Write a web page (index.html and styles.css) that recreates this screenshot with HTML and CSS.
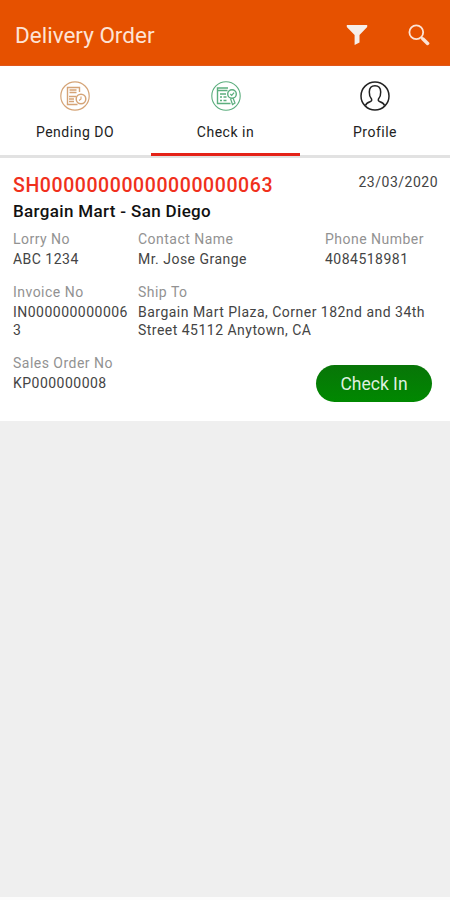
FILE: index.html
```html
<!DOCTYPE html>
<html lang="en">
<head>
<meta charset="utf-8">
<title>Delivery Order</title>
<link rel="stylesheet" href="styles.css">
</head>
<body>
<div class="app">
  <header class="bar">
    <h1 class="title">Delivery Order</h1>
    <svg class="filter" width="22" height="22" viewBox="0 0 22 22"><path d="M.8 1h20.4v2L13.5 11v7.500L8.600 21V11L.8 3z" fill="#f6eee9"/></svg>
    <svg class="search" width="22" height="22" viewBox="0 0 22 22" fill="none" stroke="#fbe3d6"><circle cx="8.3" cy="8.3" r="6.9" stroke-width="1.8"/><path d="M13 13l2 2" stroke-width="2"/><path d="M15 15l4.600 4.400" stroke-width="3.500" stroke-linecap="round"/></svg>
  </header>
  <nav class="tabs">
    <a class="tab">
      <svg width="32" height="32" viewBox="0 0 32 32" fill="none" stroke="#d5a477"><circle cx="16" cy="16" r="14.2" stroke-width="1.2"/><path d="M20.500 12V7.500h-12v17h10" stroke-width="1.4"/><path d="M10.500 10h7M10.500 12.500h7M10 16.500h7M10 19h5M10 21.500h5" stroke-width="1.3"/><circle cx="22" cy="19" r="4.800" stroke-width="1.500"/><path d="M22 16.500V19l-2 1.500" stroke-width="1.1"/></svg>
      <span>Pending DO</span>
    </a>
    <a class="tab active">
      <svg width="32" height="32" viewBox="0 0 32 32" fill="none" stroke="#5cae7e"><circle cx="16" cy="16" r="14.2" stroke-width="1.1"/><path d="M18 8H7.500v15.500h13" stroke-width="1.4"/><path d="M7.500 10.500h10M10 14h6M10 17h2M13.500 17h3M10 20.500h2M13.500 20.500h3" stroke-width="1.500"/><circle cx="22" cy="14" r="4.300" stroke-width="1.4"/><path d="M20.300 14l1.400 1.400 2.400-2.800" stroke-width="1.200"/><path d="M20.500 18.500l2 6 2.500-1.500-2-5" stroke-width="1.200"/></svg>
      <span>Check in</span>
    </a>
    <a class="tab">
      <svg width="32" height="32" viewBox="0 0 32 32" fill="none" stroke="#222"><circle cx="16" cy="16" r="14" stroke-width="1.500"/><path d="M6.500 25.500c.6-2.300 2.500-3 4.500-3.700 1.600-.6 2-1.500 1.500-2.800-1.700-1.900-2.300-4.300-2.200-7C10.400 8 12.500 5.800 16 5.800s5.600 2.200 5.700 6.200c.1 2.700-.5 5.100-2.200 7-.5 1.300-.1 2.200 1.500 2.800 2 .7 3.900 1.400 4.500 3.700" stroke-width="1.500"/></svg>
      <span>Profile</span>
    </a>
  </nav>
  <main class="card">
    <div class="head"><h2 class="number">SH00000000000000000063</h2><time class="date">23/03/2020</time></div>
    <h3 class="store">Bargain Mart - San Diego</h3>
    <dl class="fields">
      <div><dt>Lorry No</dt><dd>ABC 1234</dd></div>
      <div><dt>Contact Name</dt><dd>Mr. Jose Grange</dd></div>
      <div><dt>Phone Number</dt><dd>4084518981</dd></div>
      <div><dt>Invoice No</dt><dd class="invoice">IN0000000000063</dd></div>
      <div class="wide"><dt>Ship To</dt><dd>Bargain Mart Plaza, Corner 182nd and 34th<br>Street 45112 Anytown, CA</dd></div>
      <div class="wide"><dt>Sales Order No</dt><dd>KP000000008</dd></div>
      <button class="checkin">Check In</button>
    </dl>
  </main>
</div>
</body>
</html>
```
FILE: styles.css
```css
* { box-sizing: border-box; margin: 0; padding: 0; }
body { font-family: Roboto, sans-serif; background: #fcfcfc; color: #444; }
.app { height: 897px; background: #efefef; }
.bar { height: 66px; background: #e65100; display: flex; align-items: center; padding: 5px 20px 0 15px; border-bottom: 1px solid #e0571b; }
.title { flex: 1; font-size: 22.5px; font-weight: 400; color: #fde3d5; white-space: nowrap; }
.filter { margin-right: 40px; }
.tabs { height: 92px; display: grid; grid-template-columns: repeat(3, 1fr); background: #fff; border-bottom: 3px solid #e2e2e2; }
.tab { display: flex; flex-direction: column; align-items: center; padding-top: 14px; color: #222; font-size: 14px; line-height: 16px; letter-spacing: .5px; }
.tab span { margin-top: 12px; }
.active { border-bottom: 3px solid #e42217; margin: 0 0 -1px 1px; }
.card { height: 263px; background: #fff; padding: 17px 12px 0 13px; }
.head { display: flex; justify-content: space-between; }
.number { font-size: 19.500px; line-height: 22px; font-weight: 500; color: #f0301c; letter-spacing: .58px; white-space: nowrap; }
.date { margin-top: -1px; font-size: 14px; line-height: 16px; letter-spacing: .5px; }
.store { margin-top: 5px; font-size: 17px; line-height: 19px; font-weight: 500; color: #111; letter-spacing: .34px; }
.fields { margin-top: 9px; display: grid; grid-template-columns: 125px 187px 1fr; row-gap: 15px; font-size: 14px; letter-spacing: .48px; white-space: nowrap; }
.fields dt { color: #929292; line-height: 18px; }
.fields dd { margin-top: 2px; line-height: 18px; }
.wide { grid-column: span 2; }
.invoice { width: 118px; word-break: break-all; white-space: normal; }
.checkin { width: 116px; height: 37px; margin: 11px 0 0 -9px; border: 0; border-radius: 19px; background: linear-gradient(#087508, #008800); color: #dff0df; font: 400 17.500px Roboto, sans-serif; }
```
